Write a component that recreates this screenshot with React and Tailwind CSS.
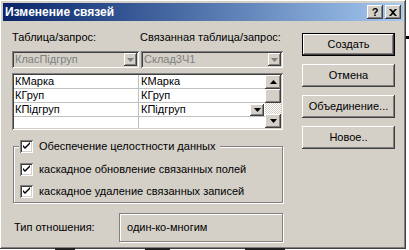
const raised =
  "shadow-[inset_-1px_-1px_#404040,inset_1px_1px_#ffffff,inset_-2px_-2px_#808080,inset_2px_2px_#d4d0c8]";
const sunken =
  "shadow-[inset_1px_1px_#808080,inset_-1px_-1px_#ffffff,inset_2px_2px_#404040,inset_-2px_-2px_#d4d0c8]";

const Arrow = ({ up, gray }) => (
  <svg width="7" height="4" viewBox="0 0 7 4">
    <path d={up ? "M3.5 0 L7 4 L0 4 Z" : "M0 0 L7 0 L3.5 4 Z"} fill={gray ? "#808080" : "#000"} />
  </svg>
);

const Check = () => (
  <svg width="9" height="9" viewBox="0 0 9 9" className="block">
    <path d="M1 3 L1 5 L3 7 L8 2 L8 0 L3 5 Z" fill="#000" />
  </svg>
);

const CheckBox = ({ label }) => (
  <div className="flex items-center gap-[6px] whitespace-nowrap">
    <div className={`w-[13px] h-[13px] bg-white flex items-center justify-center ${sunken}`}>
      <Check />
    </div>
    <span>{label}</span>
  </div>
);

const Combo = ({ text, className }) => (
  <div className={`h-[17px] flex items-center bg-[#d4d0c8] ${sunken} p-[2px] ${className}`}>
    <span className="flex-1 pl-[1px] text-[#808080] leading-[13px]">{text}</span>
    <div className={`w-[13px] h-[13px] flex items-center justify-center bg-[#d4d0c8] ${raised}`}>
      <Arrow gray />
    </div>
  </div>
);

const Button = ({ label, def }) => (
  <div className={`h-[23px] w-[93px] ${def ? "border border-black" : ""}`}>
    <div className={`h-full w-full flex items-center justify-center bg-[#d4d0c8] whitespace-nowrap ${raised}`}>{label}</div>
  </div>
);

const rows = [
  ["КМарка", "КМарка"],
  ["КГруп", "КГруп"],
  ["КПідгруп", "КПідгруп"],
  ["", ""],
];

export default function App() {
  return (
    <div
      className="w-[409px] h-[250px] bg-white relative overflow-hidden text-[11px] text-black"
      style={{ fontFamily: '"Liberation Sans", Arial, sans-serif' }}
    >
      <div className={`w-[406px] h-[249px] bg-[#d4d0c8] p-[3px] flex flex-col ${raised}`}>
        {/* Title bar */}
        <div className="h-[18px] flex items-center bg-gradient-to-r from-[#0a246a] to-[#a6caf0] pl-[2px] pr-[2px]">
          <span className="flex-1 text-white font-bold text-[12px] leading-[14px]">Изменение связей</span>
          <div className={`w-[16px] h-[14px] bg-[#d4d0c8] flex items-center justify-center font-bold text-[11px] leading-none ${raised}`}>?</div>
          <div className={`ml-[2px] w-[16px] h-[14px] bg-[#d4d0c8] flex items-center justify-center ${raised}`}>
            <svg width="8" height="7" viewBox="0 0 8 7">
              <path d="M0 0 L2 0 L4 2 L6 0 L8 0 L5 3.5 L8 7 L6 7 L4 5 L2 7 L0 7 L3 3.5 Z" fill="#000" />
            </svg>
          </div>
        </div>

        <div className="flex pl-[9px]">
          {/* Left column */}
          <div className="w-[271px] flex flex-col">
            <div className="mt-[10px] flex leading-[13px] whitespace-nowrap">
              <span className="w-[127px]">Таблица/запрос:</span>
              <span className="pl-[1px]">Связанная таблица/запрос:</span>
            </div>
            <div className="mt-[7px] flex gap-[2px]">
              <Combo text="КласПідгруп" className="w-[127px]" />
              <Combo text="Склад3Ч1" className="w-[142px]" />
            </div>

            {/* Grid */}
            <div className={`mt-[5px] h-[57px] bg-white p-[2px] flex ${sunken}`}>
              <div className="flex-1 flex flex-col overflow-hidden">
                {rows.map(([a, b], i) => (
                  <div key={i} className="h-[14px] shrink-0 flex border-b border-[#c0c0c0] leading-[13px]">
                    <div className="w-[125px] border-r border-[#c0c0c0] pl-[1px]">{a}</div>
                    <div className="flex-1 pl-[2px] flex items-center">
                      <span className="flex-1">{b}</span>
                      {i === 2 && (
                        <div className={`w-[14px] h-[12px] mr-[1px] bg-[#d4d0c8] flex items-center justify-center ${raised}`}>
                          <Arrow />
                        </div>
                      )}
                    </div>
                  </div>
                ))}
              </div>
              {/* Scrollbar */}
              <div className="w-[16px] flex flex-col">
                <div className={`h-[14px] bg-[#d4d0c8] flex items-center justify-center ${raised}`}>
                  <Arrow up />
                </div>
                <div className={`h-[14px] bg-[#d4d0c8] ${raised}`} />
                <div className="flex-1 bg-[repeating-conic-gradient(#ffffff_0_25%,#d4d0c8_0_50%)] bg-[length:2px_2px]" />
                <div className={`h-[14px] bg-[#d4d0c8] flex items-center justify-center ${raised}`}>
                  <Arrow />
                </div>
              </div>
            </div>

            {/* Group box */}
            <div className="mt-[16px] ml-[1px] h-[57px] border border-[#808080] shadow-[inset_1px_1px_#ffffff,1px_1px_#ffffff] flex flex-col">
              <div className="-mt-[7px] ml-[5px] self-start bg-[#d4d0c8] px-[1px] pr-[5px] leading-[13px]">
                <CheckBox label="Обеспечение целостности данных" />
              </div>
              <div className="mt-[10px] ml-[6px] leading-[13px]">
                <CheckBox label="каскадное обновление связанных полей" />
              </div>
              <div className="mt-[9px] ml-[6px] leading-[13px]">
                <CheckBox label="каскадное удаление связанных записей" />
              </div>
            </div>

            {/* Relation type */}
            <div className="mt-[10px] flex items-center">
              <span className="w-[107px] pl-[2px]">Тип отношения:</span>
              <div className="flex-1 h-[29px] border border-[#808080] shadow-[inset_1px_1px_#ffffff,1px_1px_#ffffff] flex items-center pl-[7px]">
                один-ко-многим
              </div>
            </div>
          </div>

          {/* Right column */}
          <div className="ml-[19px] mt-[12px] flex flex-col gap-[8px]">
            <Button label="Создать" def />
            <Button label="Отмена" />
            <Button label="Объединение..." />
            <Button label="Новое.." />
          </div>
        </div>
      </div>

      {/* background behind the window */}
      <div className="absolute left-[406px] top-[36px] w-[3px] h-[3px] bg-black" />
      <div className="absolute left-[55px] top-[248px] w-[20px] h-[2px] bg-[#202020]" />
      <div className="absolute left-[145px] top-[248px] w-[25px] h-[2px] bg-[#202020]" />
      <div className="absolute left-[245px] top-[248px] w-[40px] h-[2px] bg-[#202020]" />
    </div>
  );
}
